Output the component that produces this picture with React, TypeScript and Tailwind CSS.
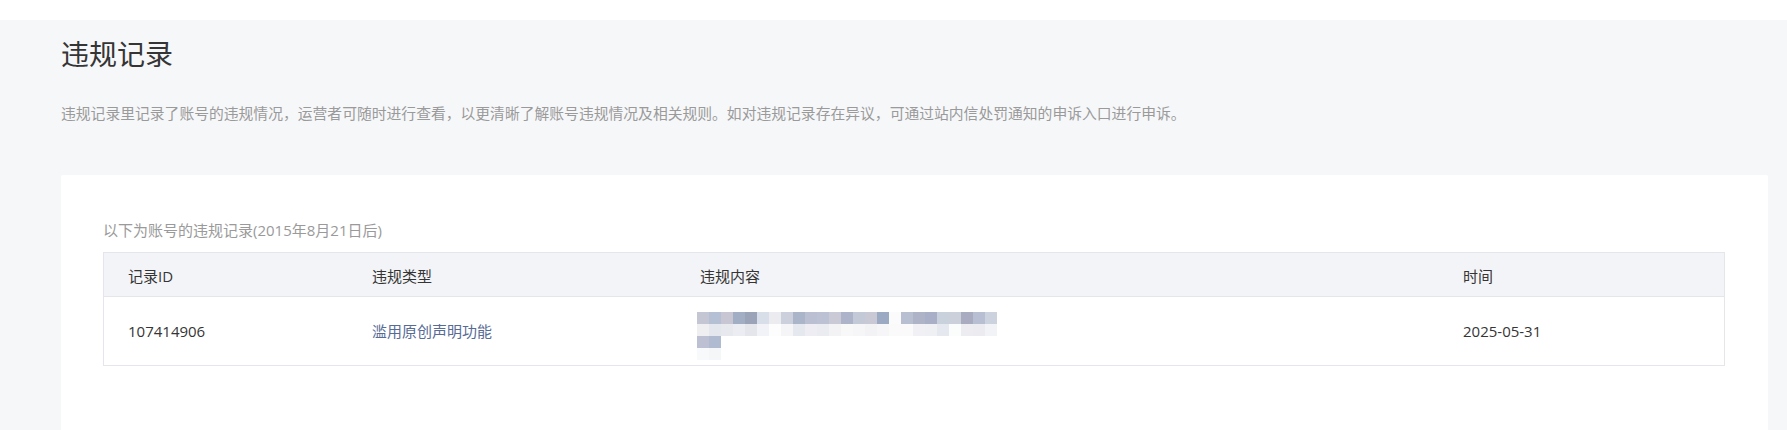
const FONT = 'font-["Open_Sans","Noto_Sans_CJK_SC",sans-serif]'

// blurred content cell, copied block by block from the reference mosaic
const MOSAIC: string[][] = [
  ['#c5c6d4', '#b6c0d4', '#c8c6d2', '#a2aec4', '#9aa3b8', '#d8dfe9', '#ebebf0', '#cccfdc', '#aab5c9', '#bbbfd2', '#bcc2d3', '#cac9d6', '#adb3c8', '#c3c9d6', '#c9c9d5', '#9ba9c3', '#fbfbfb', '#b8bfd0', '#aeb3c8', '#a9afc6', '#c9d1dd', '#ccd0db', '#a9abc0', '#b8bfd2', '#ccd3df'],
  ['#efeff2', '#e5e7ef', '#e8e8ef', '#ecedf2', '#e5e6ec', '#f2f3f8', '#fdfdfd', '#f5f5f8', '#e6e8f0', '#ededf3', '#ebecf2', '#f3f3f6', '#f8f8f8', '#f6f6f8', '#f3f3f6', '#f6f6f8', '#fafafa', '#fafafa', '#f0f0f5', '#eff0f4', '#e6e8ef', '#fbfcfc', '#ececf1', '#ececf0', '#f2f3f7'],
  ['#bdbfd2', '#b0bbd1'],
  ['#f8f9fa', '#f5f6f8'],
]

const COLS = 'grid grid-cols-[244px_328px_763px_1fr]'

function Mosaic() {
  return (
    <div className="flex flex-col">
      {MOSAIC.map((row, i) => (
        <div key={i} className="flex">
          {row.map((c, j) => (
            <div key={j} className="w-3 h-3" style={{ backgroundColor: c }} />
          ))}
        </div>
      ))}
    </div>
  )
}

export default function App() {
  return (
    <div className={`h-screen overflow-hidden bg-white ${FONT}`}>
      <div className="h-5 bg-white" />
      <div className="bg-[#f6f7f9] pl-[61px] pr-[19px] pt-4">
        {/* Page header */}
        <h2 className="text-[28px] leading-9 text-[#353535] font-normal">违规记录</h2>
        <p className="mt-[30px] text-[14.8px] leading-[22px] text-[#9a9a9a]">
          违规记录里记录了账号的违规情况，运营者可随时进行查看，以更清晰了解账号违规情况及相关规则。如对违规记录存在异议，可通过站内信处罚通知的申诉入口进行申诉。
        </p>

        {/* Records card */}
        <div className="mt-[51px] bg-white rounded-t-[2px] pl-[42px] pr-[43px] pt-[44px] h-[255px]">
          <p className="text-[15px] leading-[22px] text-[#9a9a9a]">以下为账号的违规记录(2015年8月21日后)</p>

          <div className="mt-[11px] border border-[#e4e6eb] text-[15px] text-[#353535]">
            <div className={`${COLS} h-[44px] pt-[3px] items-center bg-[#f3f4f7] border-b border-[#e4e6eb]`}>
              <div className="pl-6">记录ID</div>
              <div className="pl-6">违规类型</div>
              <div className="pl-6">违规内容</div>
              <div className="pl-6">时间</div>
            </div>
            <div className={`${COLS} h-[68px] items-center`}>
              <div className="pl-6">107414906</div>
              <div className="pl-6 text-[#576b95]">滥用原创声明功能</div>
              <div className="pl-[21px] self-start pt-[15px]">
                <Mosaic />
              </div>
              <div className="pl-6">2025-05-31</div>
            </div>
          </div>
        </div>
      </div>
    </div>
  )
}
